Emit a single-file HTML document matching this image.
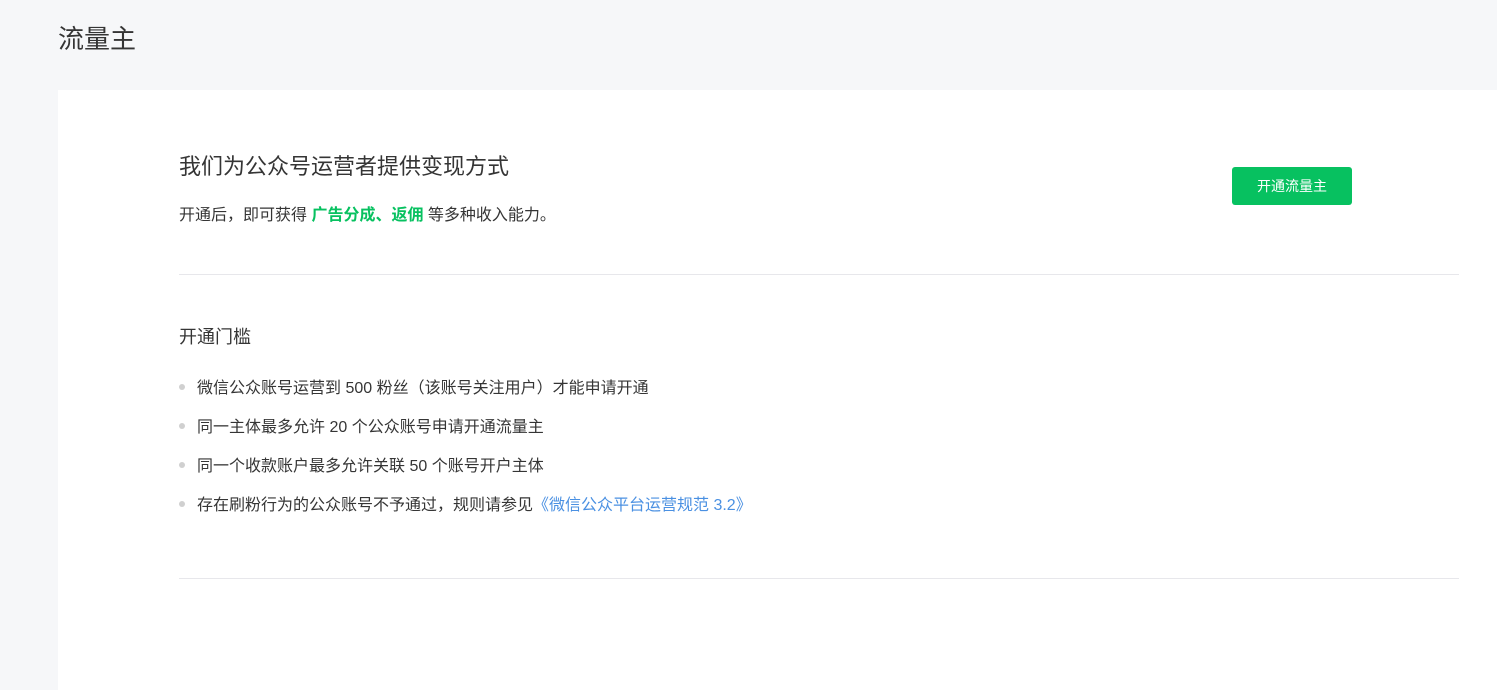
<!DOCTYPE html>
<html><head><meta charset="utf-8"><style>
*{margin:0;padding:0;box-sizing:border-box}
body{width:1497px;height:627px;overflow:hidden;background:#f6f7f9;font-family:"Liberation Sans","Noto Sans CJK SC",sans-serif;color:#353535;position:relative}
.t{position:absolute;left:58px;top:21px;font-size:26px;line-height:36px;color:#353535}
.card{position:absolute;left:58px;top:90px;width:1439px;height:600px;background:#fff}
.a{position:absolute;white-space:nowrap}
.h{left:121px;top:62px;font-size:22px;line-height:30px}
.s{left:121px;top:115px;font-size:16px;line-height:22px}
.g{color:#07c160;font-weight:bold}
.btn{position:absolute;left:1174px;top:77px;width:120px;height:38px;background:#07c160;border-radius:3px;color:#fff;font-size:14px;line-height:38px;text-align:center}
.hr{position:absolute;left:121px;width:1280px;height:1px;background:#e7e7eb}
.m{left:121px;top:235px;font-size:18px;line-height:24px}
.li{left:121px;font-size:16px;line-height:22px;padding-left:18px}
.li:before{content:"";position:absolute;left:0;top:6px;width:6px;height:6px;border-radius:50%;background:#d0d0d0}
.b{color:#4a90e2}
</style></head><body>
<div class="t">流量主</div>
<div class="card">
<div class="a h">我们为公众号运营者提供变现方式</div>
<div class="a s">开通后，即可获得 <span class="g">广告分成、返佣</span> 等多种收入能力。</div>
<div class="btn">开通流量主</div>
<div class="hr" style="top:184px"></div>
<div class="a m">开通门槛</div>
<div class="a li" style="top:288px">微信公众账号运营到 500 粉丝（该账号关注用户）才能申请开通</div>
<div class="a li" style="top:327px">同一主体最多允许 20 个公众账号申请开通流量主</div>
<div class="a li" style="top:366px">同一个收款账户最多允许关联 50 个账号开户主体</div>
<div class="a li" style="top:405px">存在刷粉行为的公众账号不予通过，规则请参见<span class="b">《微信公众平台运营规范 3.2》</span></div>
<div class="hr" style="top:488px"></div>
</div>
</body></html>
